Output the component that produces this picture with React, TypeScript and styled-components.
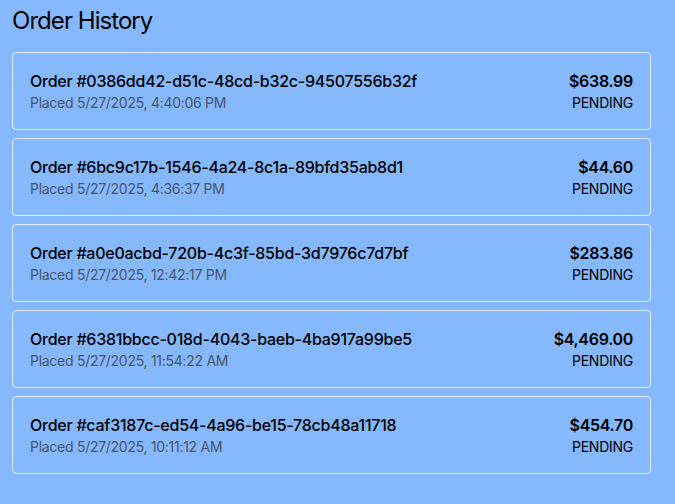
import React from "react";
import styled, { createGlobalStyle } from "styled-components";

const GlobalStyle = createGlobalStyle`
  html, body {
    margin: 0;
    padding: 0;
    background: #85b8fd;
  }
  body {
    font-family: Inter, "Noto Sans", "Liberation Sans", sans-serif;
    color: #000;
  }
`;

const Page = styled.main`
  padding: 5px 24px 24px 12px;
  min-height: 504px;
  box-sizing: border-box;
  background: #85b8fd;
`;

const Title = styled.h1`
  margin: 0 0 15px;
  font-size: 24px;
  line-height: 32px;
  font-weight: 400;
  letter-spacing: -0.95px;
  color: #000;
`;

const List = styled.ul`
  list-style: none;
  margin: 0;
  padding: 0;
  display: flex;
  flex-direction: column;
  gap: 8px;
`;

const Card = styled.li`
  display: flex;
  justify-content: space-between;
  align-items: flex-start;
  padding: 16px 17px;
  border: 1px solid rgba(255, 255, 255, 0.75);
  border-radius: 4px;
`;

const Left = styled.div`
  display: flex;
  flex-direction: column;
`;

const Right = styled.div`
  display: flex;
  flex-direction: column;
  align-items: flex-end;
`;

const OrderId = styled.div`
  font-size: 16px;
  line-height: 24px;
  font-weight: 500;
  letter-spacing: -0.25px;
`;

const Placed = styled.div`
  font-size: 14px;
  line-height: 20px;
  letter-spacing: -0.28px;
  color: #4a5568;
`;

const Price = styled.div`
  font-size: 16px;
  line-height: 24px;
  font-weight: 600;
  letter-spacing: -0.3px;
`;

const Status = styled.div`
  font-size: 14px;
  line-height: 20px;
  letter-spacing: -0.25px;
  text-transform: uppercase;
`;

const orders = [
  { id: "0386dd42-d51c-48cd-b32c-94507556b32f", placed: "5/27/2025, 4:40:06 PM", total: "$638.99" },
  { id: "6bc9c17b-1546-4a24-8c1a-89bfd35ab8d1", placed: "5/27/2025, 4:36:37 PM", total: "$44.60" },
  { id: "a0e0acbd-720b-4c3f-85bd-3d7976c7d7bf", placed: "5/27/2025, 12:42:17 PM", total: "$283.86" },
  { id: "6381bbcc-018d-4043-baeb-4ba917a99be5", placed: "5/27/2025, 11:54:22 AM", total: "$4,469.00" },
  { id: "caf3187c-ed54-4a96-be15-78cb48a11718", placed: "5/27/2025, 10:11:12 AM", total: "$454.70" },
];

export default function App() {
  return (
    <>
      <GlobalStyle />
      <Page>
        <Title>Order History</Title>
        <List>
          {orders.map((o) => (
            <Card key={o.id}>
              <Left>
                <OrderId>Order #{o.id}</OrderId>
                <Placed>Placed {o.placed}</Placed>
              </Left>
              <Right>
                <Price>{o.total}</Price>
                <Status>Pending</Status>
              </Right>
            </Card>
          ))}
        </List>
      </Page>
    </>
  );
}
